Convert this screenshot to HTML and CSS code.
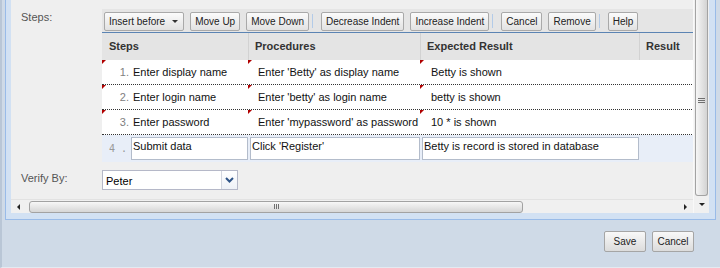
FILE: index.html
```html
<!DOCTYPE html>
<html lang="en">
<head>
    <meta charset="UTF-8">
    <title>Test Case Steps</title>
    <link rel="stylesheet" href="styles.css">
</head>
<body>
    <div class="window">
        <div class="frame">
            <div class="panel">
                <div class="main">
                    <div class="content">
                        <div class="field">
                            <div class="field-label">Steps:</div>
                            <div class="grid">
                                <div class="toolbar">
                                    <button class="tb-btn">Insert before<span class="caret"></span></button>
                                    <button class="tb-btn">Move Up</button>
                                    <button class="tb-btn">Move Down</button>
                                    <span class="tb-sep"></span>
                                    <button class="tb-btn">Decrease Indent</button>
                                    <button class="tb-btn">Increase Indent</button>
                                    <span class="tb-sep"></span>
                                    <button class="tb-btn">Cancel</button>
                                    <button class="tb-btn">Remove</button>
                                    <span class="tb-sep"></span>
                                    <button class="tb-btn">Help</button>
                                </div>
                                <div class="grid-head">
                                    <div class="col col-steps">Steps</div>
                                    <div class="col col-proc">Procedures</div>
                                    <div class="col col-exp">Expected Result</div>
                                    <div class="col col-res">Result</div>
                                </div>
                                <div class="grid-row">
                                    <div class="cell col-steps dirty"><span class="rownum">1.</span><span class="step-text">Enter display name</span></div>
                                    <div class="cell col-proc dirty">Enter 'Betty' as display name</div>
                                    <div class="cell col-exp dirty">Betty is shown</div>
                                    <div class="cell col-res"></div>
                                </div>
                                <div class="grid-row">
                                    <div class="cell col-steps dirty"><span class="rownum">2.</span><span class="step-text">Enter login name</span></div>
                                    <div class="cell col-proc dirty">Enter 'betty' as login name</div>
                                    <div class="cell col-exp dirty">betty is shown</div>
                                    <div class="cell col-res"></div>
                                </div>
                                <div class="grid-row">
                                    <div class="cell col-steps dirty"><span class="rownum">3.</span><span class="step-text">Enter password</span></div>
                                    <div class="cell col-proc dirty">Enter 'mypassword' as password</div>
                                    <div class="cell col-exp dirty">10 * is shown</div>
                                    <div class="cell col-res"></div>
                                </div>
                                <div class="grid-row editing">
                                    <div class="col-steps"><span class="rownum">4 .</span><div class="edit edit-step">Submit data</div></div>
                                    <div class="col-proc"><div class="edit">Click 'Register'</div></div>
                                    <div class="col-exp"><div class="edit">Betty is record is stored in database</div></div>
                                    <div class="col-res"></div>
                                </div>
                            </div>
                        </div>
                        <div class="field verify">
                            <div class="field-label">Verify By:</div>
                            <div class="select">
                                <span class="select-text">Peter</span>
                                <span class="trigger">
                                    <svg width="9" height="6" viewBox="0 0 9 6"><polyline points="1,1 4.5,4.5 8,1" fill="none" stroke="#2f5487" stroke-width="2"/></svg>
                                </span>
                            </div>
                        </div>
                    </div>
                    <div class="hscroll">
                        <span class="arrow arrow-left"></span>
                        <div class="h-thumb"><span class="grip-v"></span></div>
                        <div class="h-track"></div>
                        <span class="arrow arrow-right"></span>
                    </div>
                </div>
                <div class="vscroll">
                    <div class="v-thumb"><span class="grip-h"></span></div>
                    <span class="arrow arrow-down"></span>
                </div>
            </div>
        </div>
        <div class="footer">
            <button class="btn">Save</button>
            <button class="btn">Cancel</button>
        </div>
    </div>
</body>
</html>
```

FILE: styles.css
```css
* { box-sizing: border-box; margin: 0; padding: 0; }
body {
    width: 720px; height: 268px; overflow: hidden;
    background: #cfdae7; color: #111;
    font-family: "Liberation Sans", Arial, sans-serif; font-size: 11px;
}
button { font-family: inherit; cursor: pointer; }

.window {
    height: 268px; display: flex; flex-direction: column;
    border-left: 2px solid #b9c6d6; border-bottom: 1px solid #e4eaf1;
}
.frame {
    margin-left: 3px; width: 711px; height: 220px;
    border: 1px solid #99bbe8; border-top: none;
    background: #d2e1f3; padding: 0 6px 6px 5px;
}
.panel { height: 213px; background: #efefef; display: flex; }
.main { flex: 1; min-width: 0; display: flex; flex-direction: column; }
.content { flex: 1; overflow: hidden; padding-top: 9px; }

.field { display: flex; }
.field-label { width: 91px; flex: none; padding: 2px 0 0 10px; line-height: 13px; color: #555; }
.verify { margin-top: 8px; }

/* grid editor */
.grid { flex: 1; min-width: 0; overflow: hidden; }
.toolbar {
    display: flex; align-items: flex-start; height: 24px;
    padding: 3px 0 0 2px; background: #e5e5e5;
    border-bottom: 1px solid #5b84b3; width: 591px;
}
.tb-btn {
    height: 19px; padding: 0 4px; margin-left: 6px;
    border: 1px solid #a9a9a9; border-radius: 2px;
    background: linear-gradient(#fbfbfb, #e2e2e2);
    font-size: 10px; line-height: 17px; color: #222;
    display: flex; align-items: center; white-space: nowrap;
}
.tb-btn:first-child { margin-left: 0; }
.caret {
    margin: 0 1px 0 7px; width: 0; height: 0;
    border-top: 3px solid #333; border-left: 3px solid transparent; border-right: 3px solid transparent;
}
.tb-sep { width: 1px; height: 14px; margin: 2px 2px 0 3px; background: #b3cbe8; }

.grid-head, .grid-row { display: flex; width: 640px; }
.grid-head { height: 27px; background: #e4e4e4; font-weight: bold; color: #333; line-height: 27px; }
.col-steps { width: 146px; flex: none; }
.col-proc { width: 172px; flex: none; }
.col-exp { width: 219px; flex: none; }
.col-res { width: 103px; flex: none; }
.grid-head .col { padding-left: 6px; border-left: 1px solid #d2d2d2; white-space: nowrap; }
.grid-head .col-steps { padding-left: 7px; border-left: none; }

.grid-row { height: 25px; background: #fff; border-bottom: 1px dotted #333; line-height: 24px; color: #111; }
.cell { position: relative; white-space: nowrap; overflow: hidden; }
.cell.col-steps { display: flex; }
.cell.col-proc { padding-left: 10px; }
.cell.col-exp { padding-left: 11px; }
.rownum { width: 29px; flex: none; text-align: right; padding-right: 2px; color: #808080; }
.step-text { padding-left: 2px; }
.dirty::before {
    content: ""; position: absolute; top: 0; left: 0;
    border-top: 4px solid #b00000; border-right: 4px solid transparent;
}

.grid-row.editing { height: 27px; border-bottom: none; background: #e8eef8; padding-top: 2px; line-height: 13px; }
.editing .col-steps, .editing .col-proc, .editing .col-exp { display: flex; }
.editing .rownum { padding: 5px 4px 0 0; letter-spacing: 0; color: #999; font-family: "DejaVu Sans Mono", monospace; font-size: 10px; }
.edit {
    height: 23px; flex: 1; margin-left: 2px; padding: 2px 1px;
    background: #fff; border: 1px solid #b3bccb; white-space: nowrap; overflow: hidden;
}
.edit.edit-step { margin-left: 0; }

/* combo */
.select {
    width: 136px; height: 20px; display: flex;
    background: #fff; border: 1px solid #b5b8c8;
}
.select-text { flex: 1; padding: 3px 0 0 3px; line-height: 14px; color: #000; }
.trigger {
    width: 16px; display: flex; align-items: center; justify-content: center;
    border-left: 1px solid #d3d6df; background: linear-gradient(#ffffff, #eef1f6);
}

/* scrollbars */
.hscroll { height: 14px; display: flex; align-items: center; background: #f0f0f0; border-top: 1px solid #e2e2e2; }
.arrow { width: 0; height: 0; flex: none; }
.arrow-left { margin: 0 9px 0 6px; border-right: 3px solid #222; border-top: 3px solid transparent; border-bottom: 3px solid transparent; }
.arrow-right { margin: 0 6px 0 7px; border-left: 3px solid #222; border-top: 3px solid transparent; border-bottom: 3px solid transparent; }
.h-thumb {
    width: 494px; height: 12px; flex: none; display: flex; justify-content: center; align-items: center;
    border: 1px solid #a2a2a2; border-radius: 3px;
    background: linear-gradient(#f7f7f7, #d6d6d6);
}
.h-track { flex: 1; }
.grip-v {
    width: 5px; height: 5px;
    background: repeating-linear-gradient(90deg, #6f6f6f 0 1px, transparent 1px 2px);
}
.vscroll { width: 16px; flex: none; display: flex; flex-direction: column; align-items: center; background: #f0f0f0; border-left: 1px solid #f8f8f8; }
.v-thumb {
    width: 13px; height: 196px; margin: 0 1px 0 0;
    display: flex; align-items: flex-start; justify-content: center; padding-top: 98px;
    border: 1px solid #a3a3a3; border-top: none; border-radius: 0 0 3px 3px;
    background: linear-gradient(90deg, #f6f6f6, #d3d3d3);
}
.grip-h {
    width: 7px; height: 5px;
    background: repeating-linear-gradient(#6f6f6f 0 1px, transparent 1px 2px);
}
.arrow-down { margin-top: 7px; border-top: 3px solid #222; border-left: 3px solid transparent; border-right: 3px solid transparent; }

/* footer buttons */
.footer { flex: 1; display: flex; justify-content: flex-end; align-items: flex-start; gap: 6px; padding: 11px 26px 0 0; }
.btn {
    width: 42px; height: 21px; font-size: 10px; color: #222;
    border: 1px solid #a5a5a5; border-radius: 2px;
    background: linear-gradient(#f8f8f8, #dcdcdc);
}
```
